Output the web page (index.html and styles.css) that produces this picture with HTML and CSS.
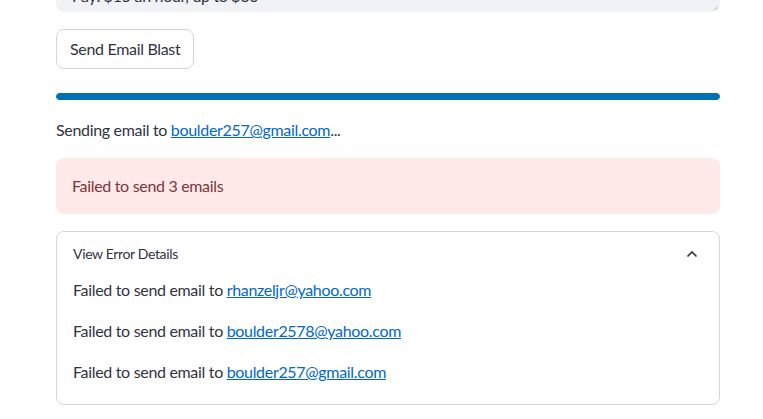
FILE: index.html
```html
<!DOCTYPE html>
<html>
<head>
<meta charset="utf-8">
<link rel="stylesheet" href="styles.css">
</head>
<body>
<main class="page">
  <div class="textarea">
    <div class="textarea-text">Pay: $15 an hour, up to $30</div>
    <svg class="resize" width="6" height="6" viewBox="0 0 6 6"><path d="M5 1 L1 5 M5 3.5 L3.5 5" stroke="#b8b8bd" stroke-width="0.8"/></svg>
  </div>
  <div class="btn-row"><button class="btn">Send Email Blast</button></div>
  <div class="progress"><div class="progress-fill" style="width:100%"></div></div>
  <p class="status">Sending email to <a href="#">boulder257@gmail.com</a>...</p>
  <div class="alert">Failed to send 3 emails</div>
  <section class="expander">
    <div class="exp-header">
      <span>View Error Details</span>
      <svg class="chev" width="12" height="8" viewBox="0 0 12 8"><path d="M1.5 6.5 L6 2 L10.5 6.5" fill="none" stroke="#31333f" stroke-width="1.6"/></svg>
    </div>
    <div class="exp-body">
      <p>Failed to send email to <a href="#">rhanzeljr@yahoo.com</a></p>
      <p>Failed to send email to <a href="#">boulder2578@yahoo.com</a></p>
      <p>Failed to send email to <a href="#">boulder257@gmail.com</a></p>
    </div>
  </section>
</main>
</body>
</html>
```
FILE: styles.css
```css
* { box-sizing: border-box; }
html, body { margin: 0; padding: 0; background: #fff; overflow: hidden; }
body {
  font-family: "Source Sans Pro", Lato, "Liberation Sans", sans-serif;
  color: #31333f;
  font-size: 16px;
  letter-spacing: -0.32px;
}
.page {
  width: 763px;
  padding: 0 43px 0 56px;
  display: flex;
  flex-direction: column;
}
.textarea {
  margin-top: -46px;
  height: 58px;
  background: #f0f2f6;
  border-radius: 0 0 8px 8px;
  display: flex;
  align-items: flex-end;
  padding: 0 16px 4px;
  position: relative;
}
.textarea-text { line-height: 24px; }
.resize { position: absolute; right: 1px; bottom: 1px; }
.btn-row { margin-top: 17px; display: flex; }
.btn {
  font: inherit;
  letter-spacing: inherit;
  color: #31333f;
  background: #fff;
  border: 1px solid #d6d6d9;
  border-radius: 8px;
  height: 40px;
  padding: 0 13px;
  line-height: 1;
}
.progress {
  margin-top: 24px;
  height: 7px;
  border-radius: 4px;
  background: #f0f2f6;
  overflow: hidden;
}
.progress-fill { height: 100%; background: #0072b5; border-radius: 4px; }
p { margin: 0; line-height: 25.6px; }
a { color: #0068c9; text-decoration: underline; }
.status { margin-top: 17px; }
.alert {
  margin-top: 15px;
  background: #ffe9e9;
  color: #7d353b;
  border-radius: 8px;
  padding: 16px;
  line-height: 24px;
}
.expander {
  margin-top: 17px;
  border: 1px solid #d6d6d9;
  border-radius: 8px;
  height: 174px;
}
.exp-header {
  display: flex;
  justify-content: space-between;
  align-items: center;
  padding: 11px 21px 12px 16px;
  font-size: 14px;
  line-height: 22px;
  letter-spacing: -0.35px;
}
.chev { display: block; }
.exp-body {
  padding: 0 16px;
  display: flex;
  flex-direction: column;
  gap: 15.6px;
}
```
